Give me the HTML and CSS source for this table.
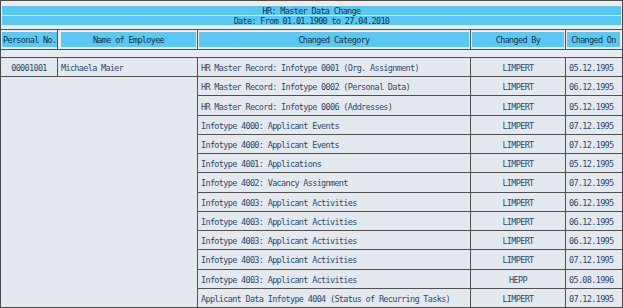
FILE: index.html
```html
<!DOCTYPE html>
<html>
<head>
<meta charset="utf-8">
<link rel="stylesheet" href="styles.css">
</head>
<body>
<div class="frame">
  <div class="title">
    <div class="title-line">HR: Master Data Change</div>
    <div class="title-line">Date: From 01.01.1900 to 27.04.2010</div>
  </div>
  <div class="grid head">
    <div class="hcell first"><span class="hbox left">Personal No.</span></div>
    <div class="hcell name"><span class="hbox">Name of Employee</span></div>
    <div class="hcell"><span class="hbox">Changed Category</span></div>
    <div class="hcell"><span class="hbox">Changed By</span></div>
    <div class="hcell last"><span class="hbox">Changed On</span></div>
  </div>
  <div class="band"></div>
  <div class="grid body">
    <div class="cell center">00001001</div>
    <div class="cell">Michaela Maier</div>
    <div class="cell">HR Master Record: Infotype 0001 (Org. Assignment)</div>
    <div class="cell center">LIMPERT</div>
    <div class="cell date">05.12.1995</div>

    <div class="cell merged"></div>
    <div class="cell">HR Master Record: Infotype 0002 (Personal Data)</div>
    <div class="cell center">LIMPERT</div>
    <div class="cell date">06.12.1995</div>

    <div class="cell">HR Master Record: Infotype 0006 (Addresses)</div>
    <div class="cell center">LIMPERT</div>
    <div class="cell date">05.12.1995</div>

    <div class="cell">Infotype 4000: Applicant Events</div>
    <div class="cell center">LIMPERT</div>
    <div class="cell date">07.12.1995</div>

    <div class="cell">Infotype 4000: Applicant Events</div>
    <div class="cell center">LIMPERT</div>
    <div class="cell date">07.12.1995</div>

    <div class="cell">Infotype 4001: Applications</div>
    <div class="cell center">LIMPERT</div>
    <div class="cell date">05.12.1995</div>

    <div class="cell">Infotype 4002: Vacancy Assignment</div>
    <div class="cell center">LIMPERT</div>
    <div class="cell date">07.12.1995</div>

    <div class="cell">Infotype 4003: Applicant Activities</div>
    <div class="cell center">LIMPERT</div>
    <div class="cell date">06.12.1995</div>

    <div class="cell">Infotype 4003: Applicant Activities</div>
    <div class="cell center">LIMPERT</div>
    <div class="cell date">06.12.1995</div>

    <div class="cell">Infotype 4003: Applicant Activities</div>
    <div class="cell center">LIMPERT</div>
    <div class="cell date">06.12.1995</div>

    <div class="cell">Infotype 4003: Applicant Activities</div>
    <div class="cell center">LIMPERT</div>
    <div class="cell date">07.12.1995</div>

    <div class="cell">Infotype 4003: Applicant Activities</div>
    <div class="cell center">HEPP</div>
    <div class="cell date">05.08.1996</div>

    <div class="cell">Applicant Data Infotype 4004 (Status of Recurring Tasks)</div>
    <div class="cell center">LIMPERT</div>
    <div class="cell date">07.12.1995</div>
  </div>
</div>
</body>
</html>
```
FILE: styles.css
```css
html, body {
  margin: 0;
  padding: 0;
  background: #ffffff;
}
body {
  font-family: "DejaVu Sans Mono", "Liberation Mono", monospace;
  font-size: 8.5px;
  letter-spacing: -0.67px;
  color: #2a4a70;
}
.frame {
  width: 623px;
  height: 308px;
  box-sizing: border-box;
  border: 1px solid #4d4d4d;
  background: #ececec;
  display: flex;
  flex-direction: column;
}
.title {
  padding: 5px 1px 4px 1px;
  display: flex;
  flex-direction: column;
  gap: 1px;
}
.title-line {
  height: 9px;
  line-height: 10px;
  background: #5bc8f4;
  color: #1a3048;
  text-align: center;
}
.grid {
  display: grid;
  grid-template-columns: 56px 139px 272px 94px 56px;
  column-gap: 1px;
  background: #505050;
}
.head {
  border-top: 1px solid #505050;
  border-bottom: 1px solid #505050;
  height: 19px;
}
.hcell {
  background: #ececec;
  padding: 2px 1px 2px 1px;
  display: flex;
}
.hcell.first { padding-left: 1px; padding-right: 0; }
.hcell.name { padding-left: 3px; }
.hcell.last { padding-right: 2px; }
.hbox {
  flex: 1;
  background: #5bc8f4;
  color: #1a3048;
  display: flex;
  align-items: center;
  justify-content: center;
  white-space: nowrap;
  padding-top: 1px;
}
.hbox.left {
  justify-content: flex-start;
  padding-left: 1px;
}
.band {
  height: 7px;
  background: #e9ecef;
}
.body {
  flex: 1;
  border-top: 1px solid #505050;
  grid-template-rows: repeat(13, 1fr);
  row-gap: 1px;
}
.cell {
  background: #e4e9f0;
  display: flex;
  align-items: center;
  padding: 2px 3px 0 3px;
  white-space: nowrap;
  overflow: hidden;
}
.cell.center { justify-content: center; }
.cell.date { padding-left: 3px; }
.merged {
  grid-column: 1 / span 2;
  grid-row: 2 / span 12;
}
```
